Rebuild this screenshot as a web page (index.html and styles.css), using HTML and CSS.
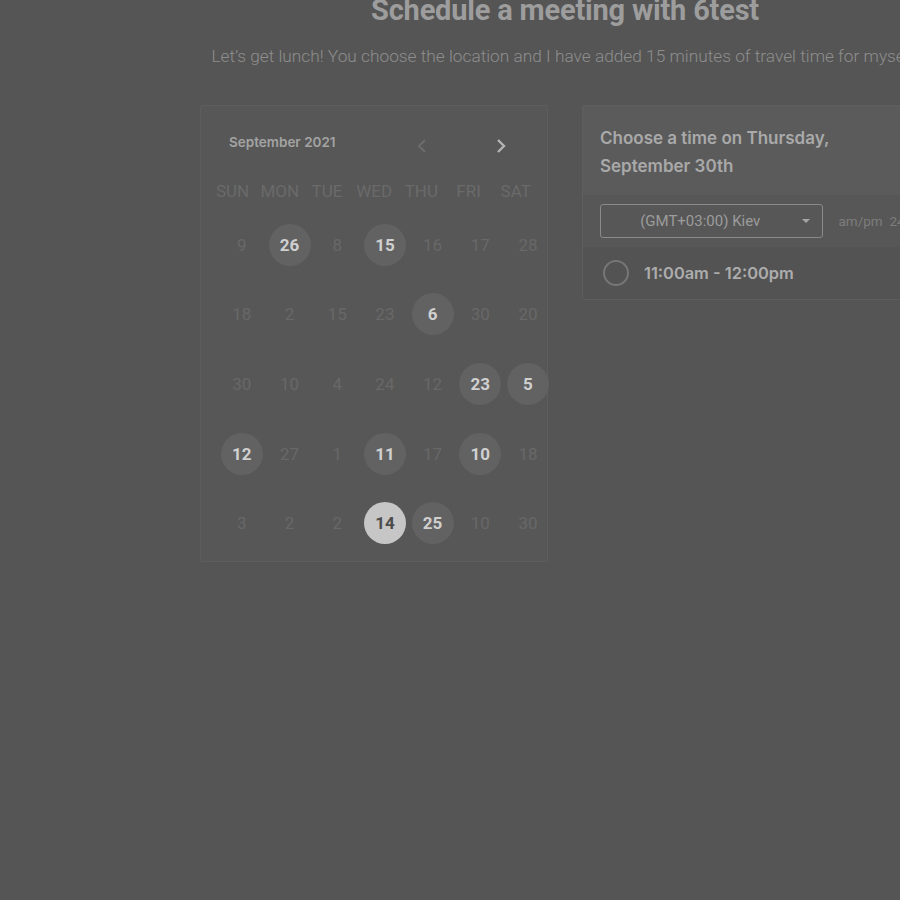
FILE: index.html
```html
<!DOCTYPE html>
<html>
<head>
<meta charset="utf-8">
<link rel="stylesheet" href="styles.css">
</head>
<body>
<div class="page">
  <h1 class="title">Schedule a meeting with 6test</h1>
  <p class="subtitle">Let’s get lunch! You choose the location and I have added 15 minutes of travel time for myself.</p>
  <div class="panels">
    <div class="calendar">
      <div class="cal-head">
        <span class="month">September 2021</span>
        <span class="arrows">
          <svg class="arrow prev" width="14" height="16" viewBox="0 0 14 16"><path d="M9 2 L3 8 L9 14" fill="none" stroke="currentColor" stroke-width="2"/></svg>
          <svg class="arrow next" width="14" height="16" viewBox="0 0 14 16"><path d="M5 2 L11 8 L5 14" fill="none" stroke="currentColor" stroke-width="2.4"/></svg>
        </span>
      </div>
      <div class="weekdays">
        <span>SUN</span><span>MON</span><span>TUE</span><span>WED</span><span>THU</span><span>FRI</span><span>SAT</span>
      </div>
      <div class="days">
        <span class="d">9</span><span class="d on">26</span><span class="d">8</span><span class="d on">15</span><span class="d">16</span><span class="d">17</span><span class="d">28</span>
        <span class="d">18</span><span class="d">2</span><span class="d">15</span><span class="d">23</span><span class="d on">6</span><span class="d">30</span><span class="d">20</span>
        <span class="d">30</span><span class="d">10</span><span class="d">4</span><span class="d">24</span><span class="d">12</span><span class="d on">23</span><span class="d on">5</span>
        <span class="d on">12</span><span class="d">27</span><span class="d">1</span><span class="d on">11</span><span class="d">17</span><span class="d on">10</span><span class="d">18</span>
        <span class="d">3</span><span class="d">2</span><span class="d">2</span><span class="d sel">14</span><span class="d on">25</span><span class="d">10</span><span class="d">30</span>
      </div>
    </div>
    <div class="times">
      <div class="times-head">Choose a time on Thursday,<br>September 30th</div>
      <div class="times-opts">
        <div class="select"><span class="select-text">(GMT+03:00) Kiev</span><span class="caret"></span></div>
        <span class="fmt">am/pm&nbsp;&nbsp;24h</span>
      </div>
      <div class="slot">
        <span class="radio"></span>
        <span class="slot-text">11:00am - 12:00pm</span>
      </div>
    </div>
  </div>
</div>
</body>
</html>
```
FILE: styles.css
```css
html, body {
  margin: 0;
  padding: 0;
  background: #555555;
  overflow: hidden;
  height: 900px;
}
.page {
  width: 1130px;
  display: flex;
  flex-direction: column;
  align-items: center;
  margin-top: -7px;
}
.title {
  margin: 0;
  font-family: Roboto, "Liberation Sans", sans-serif;
  font-weight: 700;
  font-size: 29px;
  line-height: 34px;
  color: #9d9d9d;
  letter-spacing: -0.2px;
}
.subtitle {
  margin: 19px 0 0;
  font-family: Roboto, "Liberation Sans", sans-serif;
  font-weight: 300;
  font-size: 17.3px;
  line-height: 20px;
  color: #8e8e8e;
  white-space: nowrap;
}
.panels {
  display: flex;
  gap: 34px;
  margin-top: 39px;
  align-items: flex-start;
}
.calendar {
  width: 346px;
  height: 455px;
  border: 1px solid #5e5e5e;
  background: #575757;
  border-radius: 2px;
}
.cal-head {
  display: flex;
  align-items: center;
  height: 20px;
  margin-top: 26px;
  padding-left: 28px;
}
.month {
  font-family: Inter, "Noto Sans", sans-serif;
  font-weight: 600;
  font-size: 13.5px;
  color: #a3a3a3;
  width: 187px;
}
.arrows {
  display: flex;
  gap: 63px;
  margin-top: 8px;
}
.arrow.prev { color: #6c6c6c; }
.arrow.next { color: #b4b4b4; }
.weekdays {
  display: grid;
  grid-template-columns: repeat(7, 47.2px);
  padding-left: 8px;
  margin-top: 29px;
  font-family: Roboto, "Liberation Sans", sans-serif;
  font-size: 17px;
  color: #6a6a6a;
  text-align: center;
  line-height: 20px;
}
.days {
  display: grid;
  grid-template-columns: repeat(7, 47.7px);
  grid-auto-rows: 69.6px;
  padding-left: 17px;
  margin-top: 9px;
  font-family: Roboto, "Liberation Sans", sans-serif;
  font-size: 17px;
}
.d {
  display: flex;
  align-items: center;
  justify-content: center;
  color: #686868;
}
.d.on, .d.sel {
  width: 42px;
  height: 42px;
  border-radius: 50%;
  justify-self: center;
  align-self: center;
  background: #626262;
  color: #d0d0d0;
  font-weight: 700;
}
.d.sel {
  background: #c6c6c6;
  color: #4c4c4c;
}
.times {
  width: 346px;
  border: 1px solid #5e5e5e;
  background: #575757;
  border-radius: 2px;
}
.times-head {
  background: #5b5b5b;
  padding: 18px 17px 15px;
  font-family: Inter, "Noto Sans", sans-serif;
  font-weight: 600;
  font-size: 17px;
  line-height: 28px;
  color: #a9a9a9;
}
.times-opts {
  display: flex;
  align-items: center;
  padding: 9px 17px 9px;
  gap: 16px;
  background: #575757;
}
.select {
  width: 221px;
  height: 32px;
  border: 1px solid #8a8a8a;
  border-radius: 3px;
  display: flex;
  align-items: center;
}
.select-text {
  flex: 1;
  text-align: center;
  font-family: Roboto, "Liberation Sans", sans-serif;
  font-size: 15px;
  color: #9c9c9c;
  padding-left: 2px;
  padding-right: 4px;
}
.caret {
  width: 0;
  height: 0;
  border-left: 4px solid transparent;
  border-right: 4px solid transparent;
  border-top: 4px solid #a5a5a5;
  margin-right: 12px;
}
.fmt {
  font-family: Roboto, "Liberation Sans", sans-serif;
  font-size: 13.5px;
  color: #7d7d7d;
  white-space: nowrap;
}
.slot {
  display: flex;
  align-items: center;
  height: 52px;
  padding-left: 20px;
  gap: 15px;
  background: #535353;
}
.radio {
  width: 22px;
  height: 22px;
  border: 2px solid #767676;
  border-radius: 50%;
}
.slot-text {
  font-family: Inter, "Noto Sans", sans-serif;
  font-weight: 600;
  font-size: 16.4px;
  color: #adadad;
}
```
